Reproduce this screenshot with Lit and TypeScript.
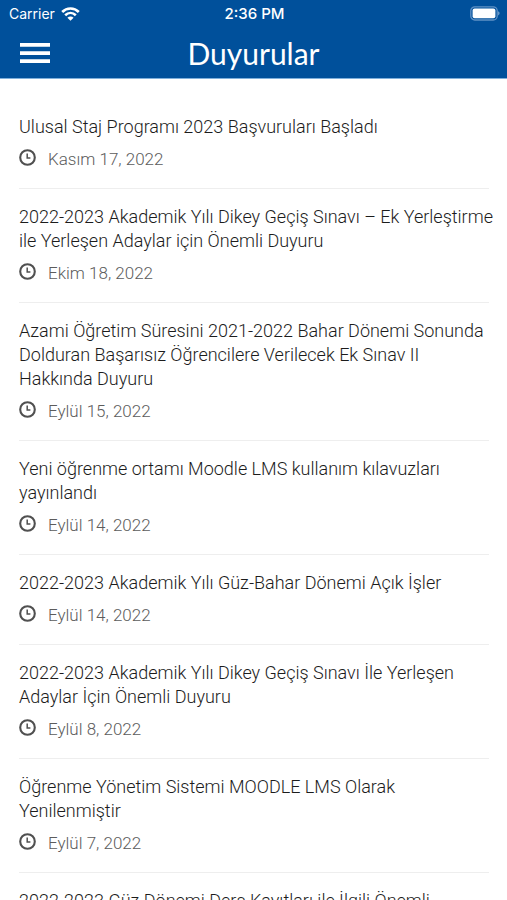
import { LitElement, html, css } from "lit";
import { customElement, property } from "lit/decorators.js";

interface Announcement {
  title: string;
  date: string;
  iso: string;
}

const announcements: Announcement[] = [
  { title: "Ulusal Staj Programı 2023 Başvuruları Başladı", date: "Kasım 17, 2022", iso: "2022-11-17" },
  { title: "2022-2023 Akademik Yılı Dikey Geçiş Sınavı – Ek Yerleştirme ile Yerleşen Adaylar için Önemli Duyuru", date: "Ekim 18, 2022", iso: "2022-10-18" },
  { title: "Azami Öğretim Süresini 2021-2022 Bahar Dönemi Sonunda Dolduran Başarısız Öğrencilere Verilecek Ek Sınav II Hakkında Duyuru", date: "Eylül 15, 2022", iso: "2022-09-15" },
  { title: "Yeni öğrenme ortamı Moodle LMS kullanım kılavuzları yayınlandı", date: "Eylül 14, 2022", iso: "2022-09-14" },
  { title: "2022-2023 Akademik Yılı Güz-Bahar Dönemi Açık İşler", date: "Eylül 14, 2022", iso: "2022-09-14" },
  { title: "2022-2023 Akademik Yılı Dikey Geçiş Sınavı İle Yerleşen Adaylar İçin Önemli Duyuru", date: "Eylül 8, 2022", iso: "2022-09-08" },
  { title: "Öğrenme Yönetim Sistemi MOODLE LMS Olarak Yenilenmiştir", date: "Eylül 7, 2022", iso: "2022-09-07" },
  { title: "2022-2023 Güz Dönemi Ders Kayıtları ile İlgili Önemli", date: "", iso: "" },
];

@customElement("status-bar")
export class StatusBar extends LitElement {
  static styles = css`
    :host {
      display: grid;
      grid-template-columns: 1fr auto 1fr;
      align-items: center;
      height: 28px;
      padding: 0 7px 0 9px;
      font: 400 14px/20px Inter, "Liberation Sans", sans-serif;
    }
    .carrier {
      display: flex;
      align-items: center;
      gap: 6px;
    }
    .time {
      font-size: 15px;
      font-weight: 500;
    }
    .battery {
      justify-self: end;
    }
    svg {
      display: block;
    }
  `;

  render() {
    return html`
      <span class="carrier">
        Carrier
        <svg width="19" height="14" viewBox="0 0 19 14" fill="none" stroke="#fff" stroke-width="2.6" aria-label="Wi-Fi">
          <path d="M1.2 5C5.8 .4 13.2 .4 17.8 5" />
          <path d="M4.2 8.2C7.3 5.2 11.7 5.2 14.8 8.2" />
          <path d="M9.5 13.8L6.4 10.7C8.2 9.2 10.8 9.2 12.6 10.7Z" fill="#fff" stroke="none" />
        </svg>
      </span>
      <span class="time">2:36 PM</span>
      <svg class="battery" width="30" height="16" viewBox="0 0 30 16" aria-label="Battery">
        <rect x="0.8" y="0.8" width="26.4" height="13.2" rx="4" fill="none" stroke="#5f91c5" stroke-width="1.3" />
        <rect x="2.6" y="2.6" width="22.8" height="9.6" rx="2" fill="#fff" />
        <path d="M28.2 5.3C30 6 30 8.8 28.2 9.5Z" fill="#7fa8d2" />
      </svg>
    `;
  }
}

@customElement("announcement-item")
export class AnnouncementItem extends LitElement {
  @property({ attribute: false }) item!: Announcement;

  static styles = css`
    :host {
      display: block;
      padding: 16px 0 17px;
      border-bottom: 1px solid #eee;
    }
    .title {
      display: block;
      margin-right: -8px;
      color: #1c1c1c;
      font-size: 18px;
      line-height: 24px;
      text-decoration: none;
    }
    .meta {
      display: flex;
      align-items: flex-start;
      gap: 12px;
      margin-top: 8px;
      color: #5c5c5c;
      font-size: 17px;
      line-height: 24px;
    }
  `;

  render() {
    const { title, date, iso } = this.item;
    return html`
      <a class="title" href="#">${title}</a>
      ${date
        ? html`<div class="meta">
            <svg width="17" height="21" viewBox="0 0 17 21" fill="none" stroke="#505050" aria-hidden="true">
              <circle cx="8.5" cy="10.5" r="7.3" stroke-width="2.1" />
              <path d="M8.2 6.5V11H11.4" stroke-width="1.5" />
            </svg>
            <time datetime=${iso}>${date}</time>
          </div>`
        : null}
    `;
  }
}

@customElement("app-root")
export class AppRoot extends LitElement {
  static styles = css`
    :host {
      display: block;
      height: 100vh;
      overflow: hidden;
      background: #fff;
      font-family: Roboto, "Noto Sans", sans-serif;
      font-weight: 300;
    }
    header {
      background: #00509b;
      border-bottom: 1px solid #7fb0dc;
      color: #fff;
    }
    .bar {
      display: grid;
      grid-template-columns: 1fr auto 1fr;
      align-items: center;
      height: 50px;
      padding: 0 20px;
    }
    .menu {
      justify-self: start;
      padding: 0;
      border: 0;
      background: none;
      color: inherit;
    }
    .menu svg {
      display: block;
    }
    h1 {
      margin: 0;
      font: 400 30px/40px Lato, "Noto Sans", sans-serif;
    }
    main {
      padding: 20px 18px 0 19px;
    }
  `;

  render() {
    return html`
      <header>
        <status-bar></status-bar>
        <div class="bar">
          <button class="menu" aria-label="Menü">
            <svg width="30" height="20" viewBox="0 0 30 20" fill="currentColor">
              <path d="M0 0H30V3.700H0ZM0 8.200H30V11.900H0ZM0 16.300H30V20H0Z" />
            </svg>
          </button>
          <h1>Duyurular</h1>
        </div>
      </header>
      <main>
        ${announcements.map((a) => html`<announcement-item .item=${a}></announcement-item>`)}
      </main>
    `;
  }
}
